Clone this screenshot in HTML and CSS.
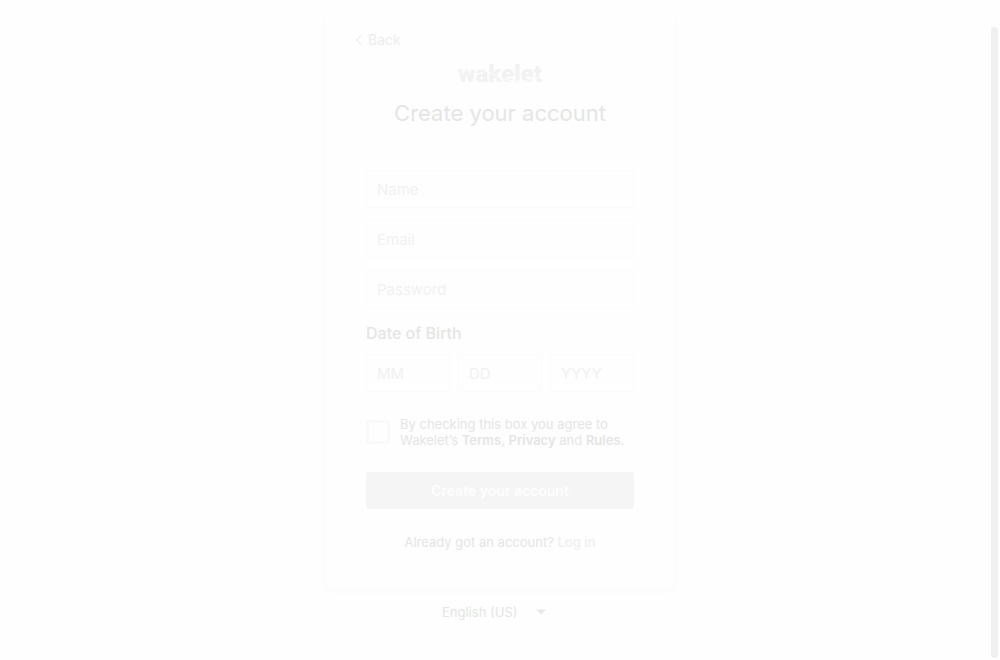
FILE: index.html
```html
<!DOCTYPE html>
<html lang="en-US">
<head>
<meta charset="utf-8">
<meta name="viewport" content="width=device-width, initial-scale=1">
<title>Create your account</title>
<link rel="stylesheet" href="styles.css">
</head>
<body>
<main class="page">
  <section class="card">
    <button class="back" type="button">
      <svg class="back-icon" viewBox="0 0 8 12" aria-hidden="true"><path d="M6.5 1.2 1.6 6l4.9 4.8"/></svg>
      Back
    </button>
    <svg class="logo" viewBox="-2 -4 88 32" role="img" aria-label="wakelet">
      <text class="logo-text" x="42" y="20" text-anchor="middle">wakelet</text>
      <path class="logo-swoosh" d="M0 11C10 6.500 22 6 32 11S45 18 54 18.700S74 18.500 84 14.500"/>
    </svg>
    <h1 class="title">Create your account</h1>
    <form class="form">
      <div class="fields">
        <input class="input" type="text" placeholder="Name" aria-label="Name">
        <input class="input" type="email" placeholder="Email" aria-label="Email">
        <input class="input" type="password" placeholder="Password" aria-label="Password">
      </div>
      <fieldset class="birth">
        <legend class="birth-label">Date of Birth</legend>
        <div class="birth-fields">
          <input class="input" type="text" placeholder="MM" aria-label="Month">
          <input class="input" type="text" placeholder="DD" aria-label="Day">
          <input class="input" type="text" placeholder="YYYY" aria-label="Year">
        </div>
      </fieldset>
      <div class="agree">
        <input class="checkbox" type="checkbox" id="agree">
        <label class="agree-text" for="agree">By checking this box you agree to Wakelet’s <a href="#">Terms</a>, <a href="#">Privacy</a> and <a href="#">Rules</a>.</label>
      </div>
      <button class="submit" type="submit">Create your account</button>
    </form>
    <p class="login">Already got an account? <a class="login-link" href="#">Log in</a></p>
  </section>
  <div class="language">
    <select class="language-select" aria-label="Language"><option>English (US)</option></select>
    <svg class="language-icon" viewBox="0 0 10 6" aria-hidden="true"><path d="M0 .5h10L5 5.500z"/></svg>
  </div>
</main>
<div class="scrollbar" aria-hidden="true"></div>
</body>
</html>
```
FILE: styles.css
```css
* { box-sizing: border-box; }
body {
  margin: 0;
  background: #fefefe;
  color: #e5e5e5;
  font-family: Inter, "Liberation Sans", sans-serif;
  font-size: 13px;
}
input, button, select { font: inherit; color: inherit; }
a { color: inherit; font-weight: 600; text-decoration: none; }
.page {
  display: flex;
  flex-direction: column;
  align-items: center;
  padding: 8px 16px;
}
.card {
  width: 100%;
  max-width: 348px;
  padding: 22px 40px 38px;
  border-radius: 8px;
  background: #fefefe;
  box-shadow: 0 2px 4px 2px #fcfcfc;
  display: flex;
  flex-direction: column;
}
.back {
  align-self: flex-start;
  display: flex;
  align-items: center;
  gap: 5px;
  margin-left: -11px;
  padding: 0;
  border: 0;
  background: none;
  color: #ededed;
  font-size: 14px;
  line-height: 20px;
}
.back-icon {
  width: 8px;
  height: 12px;
  fill: none;
  stroke: #e8e8e8;
}
.logo {
  align-self: center;
  width: 88px;
  height: 32px;
  margin-top: 8px;
}
.logo-text {
  fill: #f2f2f2;
  font-family: Roboto, sans-serif;
  font-size: 24px;
  font-weight: 900;
}
.logo-swoosh {
  fill: none;
  stroke: #fefefe;
  stroke-width: 1;
}
.title {
  margin: 8px 0 0;
  font-size: 22px;
  font-weight: 400;
  line-height: 30px;
  text-align: center;
}
.form { margin-top: 42px; }
.fields { display: grid; gap: 12px; }
.input {
  width: 100%;
  min-width: 0;
  height: 38px;
  padding: 0 10px;
  border: 1px solid #fbfbfb;
  border-radius: 4px;
  background: #fefefe;
  font-size: 15px;
}
.input::placeholder { color: #f1f1f1; opacity: 1; }
.birth { margin: 15px 0 0; padding: 0; border: 0; min-width: 0; }
.birth-label {
  padding: 0;
  font-size: 16px;
  font-weight: 500;
  line-height: 20px;
}
.birth-fields {
  display: grid;
  grid-template-columns: repeat(3, 1fr);
  gap: 8px;
  padding-top: 11px;
}
.agree {
  display: flex;
  align-items: center;
  gap: 10px;
  margin-top: 24px;
}
.checkbox {
  flex: none;
  appearance: none;
  width: 24px;
  height: 24px;
  margin: 0;
  border: 3px solid #fafafa;
  border-radius: 2px;
}
.agree-text { line-height: 16px; }
.submit {
  width: 100%;
  height: 37px;
  margin-top: 24px;
  border: 0;
  border-radius: 3px;
  background: #f5f5f5;
  color: #fefefe;
  font-size: 14px;
  font-weight: 600;
}
.login {
  margin: 24px 0 0;
  line-height: 18px;
  text-align: center;
}
.login-link { color: #f1f1f1; }
.language {
  display: flex;
  align-items: center;
  gap: 18px;
  margin-top: 13px;
  padding-right: 12px;
}
.language-select {
  appearance: none;
  padding: 0;
  border: 0;
  background: none;
  line-height: 20px;
}
.language-icon { width: 10px; height: 6px; fill: #e8e8e8; }
.scrollbar {
  position: fixed;
  top: 27px;
  right: 2px;
  bottom: 2px;
  width: 7px;
  border-radius: 4px;
  background: #f0f0f0;
}
```
